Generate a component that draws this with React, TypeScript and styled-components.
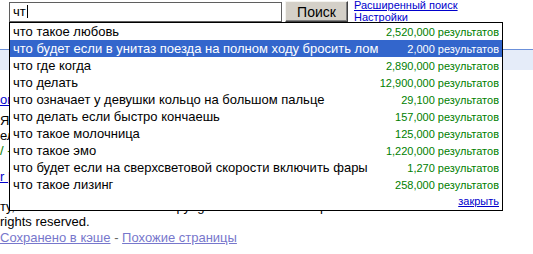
import React from "react";
import styled, { createGlobalStyle } from "styled-components";

const Global = createGlobalStyle`
  html, body { margin: 0; padding: 0; background: #fff; }
  body {
    font-family: "Liberation Sans", Arial, sans-serif;
    width: 533px;
    height: 254px;
    overflow: hidden;
    color: #000;
  }
`;

const Page = styled.div`
  position: relative;
  width: 533px;
  height: 254px;
  overflow: hidden;
`;

const TopRow = styled.div`
  display: flex;
  align-items: flex-start;
  height: 22px;
  padding-left: 9px;
`;

const SearchBox = styled.div`
  position: relative;
  margin-top: 2px;
  z-index: 2;
`;

const Field = styled.div`
  box-sizing: border-box;
  width: 273px;
  height: 20px;
  border: 1px solid #5f5f5f;
  background: #fff;
  padding: 1px 3px 0;
  font-size: 13px;
  line-height: 15px;
  white-space: nowrap;
`;

const Caret = styled.span`
  display: inline-block;
  width: 1px;
  height: 13px;
  margin-left: 1px;
  background: #000;
  vertical-align: -2px;
`;

const SearchButton = styled.button`
  box-sizing: border-box;
  width: 63px;
  height: 21px;
  margin: 1px 0 0 3px;
  padding: 0;
  background: #d4d0c8;
  border: 1px solid;
  border-color: #f4f3ef #404040 #404040 #f4f3ef;
  box-shadow: inset -1px -1px #808080;
  font-family: "Liberation Sans", Arial, sans-serif;
  font-size: 14px;
  line-height: 18px;
  color: #000;
`;

const Links = styled.div`
  display: flex;
  flex-direction: column;
  margin: -1px 0 0 6px;
  font-size: 11px;
  line-height: 12px;
`;

const SmallLink = styled.a`
  color: #0000cc;
  text-decoration: underline;
  white-space: nowrap;
`;

const Suggest = styled.div`
  position: absolute;
  top: 100%;
  left: 0;
  width: 494px;
  box-sizing: border-box;
  border: 1px solid #000;
  background: #fff;
`;

const SuggestRow = styled.div<{ $selected?: boolean }>`
  display: flex;
  justify-content: space-between;
  align-items: baseline;
  height: 17px;
  padding: 0 3px;
  background: ${(p) => (p.$selected ? "#3366cc" : "#fff")};
  color: ${(p) => (p.$selected ? "#fff" : "#000")};
  white-space: nowrap;
`;

const Query = styled.span`
  font-size: 13px;
  line-height: 17px;
`;

const Count = styled.span<{ $selected?: boolean }>`
  font-size: 11px;
  line-height: 17px;
  color: ${(p) => (p.$selected ? "#fff" : "#008000")};
`;

const CloseRow = styled.div`
  display: flex;
  justify-content: flex-end;
  height: 17px;
  padding: 0 3px;
  font-size: 11px;
  line-height: 17px;
`;

const HeaderBar = styled.div`
  margin-top: 27px;
  height: 20px;
  border-top: 1px solid #6b90da;
  background: #e5ecf9;
`;

const Results = styled.div`
  padding-top: 22px;
  font-size: 13px;
  line-height: 15px;
  white-space: nowrap;
`;

const Title = styled.a<{ $top?: number; $bottom?: number }>`
  display: block;
  margin-top: ${(p) => p.$top ?? 0}px;
  margin-bottom: ${(p) => p.$bottom ?? 0}px;
  color: #0000cc;
  text-decoration: underline;
`;

const Line = styled.div<{ $indent?: number }>`
  padding-left: ${(p) => p.$indent ?? 0}px;
`;

const Url = styled.div`
  color: #008000;
`;

const CacheLine = styled.div`
  margin-top: 1px;
  color: #666;
`;

const CacheLink = styled.a`
  color: #7777cc;
  text-decoration: underline;
`;

const suggestions: [string, string][] = [
  ["что такое любовь", "2,520,000"],
  ["что будет если в унитаз поезда на полном ходу бросить лом", "2,000"],
  ["что где когда", "2,890,000"],
  ["что делать", "12,900,000"],
  ["что означает у девушки кольцо на большом пальце", "29,100"],
  ["что делать если быстро кончаешь", "157,000"],
  ["что такое молочница", "125,000"],
  ["что такое эмо", "1,220,000"],
  ["что будет если на сверхсветовой скорости включить фары", "1,270"],
  ["что такое лизинг", "258,000"],
];

export default function App() {
  return (
    <Page>
      <Global />
      <TopRow>
        <SearchBox>
          <Field>
            чт<Caret />
          </Field>
          <Suggest>
            {suggestions.map(([q, n], i) => (
              <SuggestRow key={q} $selected={i === 1}>
                <Query>{q}</Query>
                <Count $selected={i === 1}>{n} результатов</Count>
              </SuggestRow>
            ))}
            <CloseRow>
              <SmallLink href="#">закрыть</SmallLink>
            </CloseRow>
          </Suggest>
        </SearchBox>
        <SearchButton>Поиск</SearchButton>
        <Links>
          <SmallLink href="#">Расширенный поиск</SmallLink>
          <SmallLink href="#">Настройки</SmallLink>
        </Links>
      </TopRow>
      <HeaderBar />
      <Results>
        <Title href="#" $bottom={6}>
          ог «Что? Где? Когда?» — официальный сайт
        </Title>
        <Line>Языковые игры, вопросы знатоков и ответы</Line>
        <Line>елевизионного клуба. Архив вопросов и игр.</Line>
        <Url>/ - 31k - Сохранено в кэше - Похожие страницы</Url>
        <Title href="#" $top={11}>
          r [PDF] Что делать — полное руководство
        </Title>
        <Line $indent={14}>Вопросы и ответы, советы и обсуждения на форуме.</Line>
        <Line>ту, все тексты и ответы — Copyright © 2008 ООО «Игра-ТВ». All</Line>
        <Line>rights reserved.</Line>
        <CacheLine>
          <CacheLink href="#">Сохранено в кэше</CacheLink> -{" "}
          <CacheLink href="#">Похожие страницы</CacheLink>
        </CacheLine>
      </Results>
    </Page>
  );
}
